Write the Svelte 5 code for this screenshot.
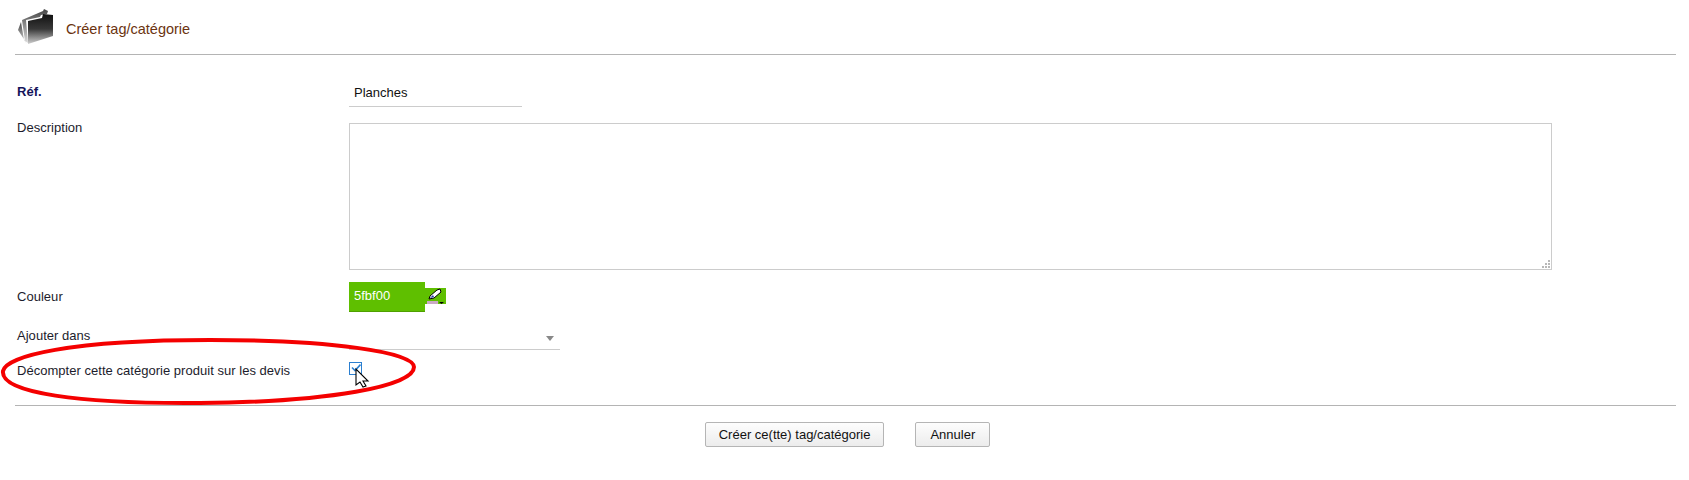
<script lang="ts">
  let ref = "Planches";
  let description = "";
  const colour = "5fbf00";
</script>

<div class="page">
  <header class="head">
    <svg class="folder" width="38" height="38" viewBox="0 0 38 38">
      <defs>
        <linearGradient id="fold" x1="0" y1="0" x2="0" y2="1">
          <stop offset="0" stop-color="#111" />
          <stop offset="0.5" stop-color="#383838" />
          <stop offset="1" stop-color="#cfcfcf" />
        </linearGradient>
        <linearGradient id="back" x1="0" y1="0" x2="0" y2="1">
          <stop offset="0" stop-color="#444" />
          <stop offset="1" stop-color="#dcdcdc" />
        </linearGradient>
      </defs>
      <path d="M1 22 L4 14 L7 32 L10 36 Z" fill="url(#back)" />
      <path d="M5 12 L26 3 L27 1 L31 3 L30 6 L24 7 L23 9 L9 12 L11 35 L8 33 Z" fill="url(#back)" />
      <path d="M11 13 L25 10 L26 6 L36 7 L36 28 L11 36 Z" fill="url(#fold)" />
    </svg>
    <h1>Créer tag/catégorie</h1>
  </header>

  <form class="form">
    <div class="row">
      <label class="label strong ref-label" for="ref">Réf.</label>
      <input id="ref" class="line-input" bind:value={ref} />
    </div>

    <div class="row row-desc">
      <label class="label desc-label" for="desc">Description</label>
      <div class="area">
        <textarea id="desc" bind:value={description}></textarea>
        <svg class="grip" width="9" height="9" viewBox="0 0 9 9" fill="#b8b8b8">
          <rect x="6" y="0" width="2" height="2" />
          <rect x="3" y="3" width="2" height="2" />
          <rect x="6" y="3" width="2" height="2" />
          <rect x="0" y="6" width="2" height="2" />
          <rect x="3" y="6" width="2" height="2" />
          <rect x="6" y="6" width="2" height="2" />
        </svg>
      </div>
    </div>

    <div class="row row-colour">
      <span class="label colour-label">Couleur</span>
      <div class="picker">
        <span class="colour-value">{colour}</span>
        <span class="swatch">
          <svg width="21" height="16" viewBox="0 0 21 16">
            <rect x="2" y="13" width="11" height="3" fill="#c9a9c4" />
            <path d="M4 11 L5 8 L12 2 L15 1 L16 4 L9 10 Z" fill="#fff" stroke="#000" stroke-width="1" />
            <path d="M5 10 L8 7 L9 9 Z" fill="#2233aa" />
            <path d="M14 14 L19 14 L16.5 16 Z" fill="#000" />
          </svg>
        </span>
      </div>
    </div>

    <div class="row row-select">
      <span class="label select-label">Ajouter dans</span>
      <div class="select"><span class="arrow"></span></div>
    </div>

    <div class="row row-check">
      <span class="label check-label">Décompter cette catégorie produit sur les devis</span>
      <span class="check">
        <svg width="10" height="10" viewBox="0 0 10 10">
          <path d="M1 4.5 L4 7.5 L9.5 1.5" fill="none" stroke="#2b7fd0" stroke-width="1.6" />
        </svg>
      </span>
    </div>
  </form>

  <div class="actions">
    <button type="button" class="create">Créer ce(tte) tag/catégorie</button>
    <button type="button">Annuler</button>
  </div>

  <!-- annotation drawn over the screenshot -->
  <svg class="markup" width="430" height="80" viewBox="0 0 430 80">
    <path
      d="M3 33 C6 18 70 2 210 2 C330 2 414 14 414 29 C414 48 330 64 200 65 C80 66 0 55 3 33 Z"
      fill="none"
      stroke="#f40000"
      stroke-width="4"
    />
    <path
      d="M356 31 L356 47 L360 44 L363 49 L366 48 L363 43 L368 43 Z"
      fill="#fff"
      stroke="#000"
      stroke-width="1.1"
    />
  </svg>
</div>

<style>
  :global(body) {
    margin: 0;
    background: #fff;
  }

  .page {
    position: relative;
    height: 480px;
    padding: 0 13px 0 15px;
    box-sizing: border-box;
    font-family: "Liberation Sans", Arial, sans-serif;
    font-size: 13px;
    color: #1c1c2c;
  }

  .head {
    display: flex;
    align-items: center;
    height: 54px;
    border-bottom: 1px solid #b4b4b4;
    box-sizing: content-box;
  }

  .folder {
    margin-left: 2px;
  }

  h1 {
    margin: 3px 0 0 11px;
    font-size: 14.5px;
    font-weight: normal;
    color: #6b3410;
  }

  .form {
    padding: 26px 0 0 2px;
    height: 351px;
    box-sizing: border-box;
    border-bottom: 1px solid #b4b4b4;
  }

  .row {
    display: flex;
    align-items: flex-start;
  }

  .label {
    width: 332px;
    flex: none;
    letter-spacing: 0.03px;
  }

  .strong {
    font-weight: bold;
    color: #14145a;
  }

  .ref-label {
    padding-top: 3px;
  }

  .line-input {
    width: 173px;
    height: 26px;
    padding: 0 5px 3px;
    box-sizing: border-box;
    border: 0;
    border-bottom: 1px solid #ccc;
    outline: 0;
    font: inherit;
    color: #111;
  }

  .row-desc {
    margin-top: 16px;
  }

  .desc-label {
    margin-top: -3px;
  }

  .area {
    position: relative;
    width: 1203px;
    height: 147px;
  }

  textarea {
    display: block;
    width: 100%;
    height: 100%;
    box-sizing: border-box;
    border: 1px solid #ccc;
    outline: 0;
    resize: none;
  }

  .grip {
    position: absolute;
    right: 1px;
    bottom: 1px;
  }

  .row-colour {
    margin-top: 12px;
    height: 30px;
  }

  .colour-label {
    padding-top: 7px;
  }

  .picker {
    display: flex;
    align-items: flex-start;
  }

  .colour-value {
    width: 76px;
    height: 30px;
    line-height: 28px;
    padding-left: 5px;
    box-sizing: border-box;
    background: #5fbf00;
    border-bottom: 1px solid #4fa000;
    color: #fff;
  }

  .swatch {
    display: block;
    width: 21px;
    height: 16px;
    margin-top: 6px;
    background: #5fbf00;
  }

  .swatch svg {
    display: block;
  }

  .row-select {
    margin-top: 14px;
    height: 24px;
  }

  .select-label {
    padding-top: 2px;
  }

  .select {
    position: relative;
    width: 211px;
    height: 24px;
    box-sizing: border-box;
    border-bottom: 1px solid #ccc;
  }

  .arrow {
    position: absolute;
    right: 6px;
    top: 10px;
    border-left: 4px solid transparent;
    border-right: 4px solid transparent;
    border-top: 5px solid #888;
  }

  .row-check {
    margin-top: 12px;
    height: 13px;
  }

  .check-label {
    padding-top: 1px;
  }

  .check {
    display: block;
    width: 13px;
    height: 13px;
    box-sizing: border-box;
    border: 1px solid #2b7fd0;
  }

  .check svg {
    display: block;
    margin: 0 0 0 1px;
  }

  .actions {
    display: flex;
    justify-content: center;
    gap: 31px;
    padding-top: 16px;
    padding-left: 4px;
  }

  button {
    height: 25px;
    padding: 0 14px;
    border: 1px solid #b5b5b5;
    border-radius: 2px;
    background: linear-gradient(#fdfdfd, #ececec);
    font: inherit;
    font-size: 13px;
    color: #111;
  }

  .create {
    padding: 0 13px;
  }

  .markup {
    position: absolute;
    left: 0;
    top: 338px;
    pointer-events: none;
  }
</style>
